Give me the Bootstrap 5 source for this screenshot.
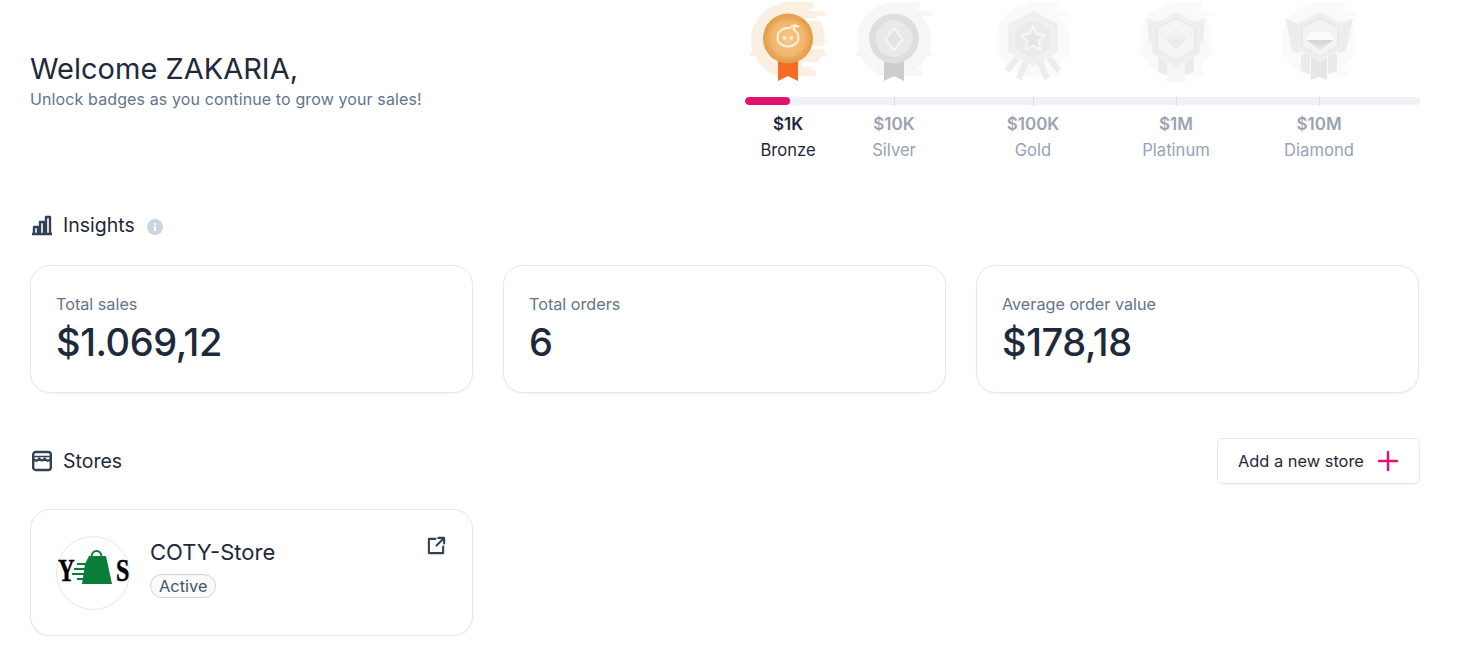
<!DOCTYPE html>
<html lang="en">
<head>
<meta charset="utf-8">
<title>Dashboard</title>
<link href="https://cdn.jsdelivr.net/npm/bootstrap@5.3.0/dist/css/bootstrap.min.css" rel="stylesheet">
<style>
body{font-family:Inter,"Liberation Sans",sans-serif;color:#1e293b;background:#fff;font-size:16px}
.page-wrap{padding:0 42px 0 30px}
.top-block{height:163px}
.hello{font-size:29px;line-height:34px;font-weight:400;margin:0;color:#1e293b}
.hello-sub{font-size:16px;line-height:24px;color:#64748b;margin:1px 0 0;letter-spacing:.12px}
.ladder{width:675px}
.ms-row{display:flex}
.ms-a{width:86px}.ms-b{width:126px}.ms-c{width:152px}.ms-d{width:134px}.ms-e{width:152px}
.medal-row{height:97px}
.medal-cell{display:flex;justify-content:center}
.medal-cell svg{width:76px;height:84px;display:block}
.bar-wrap{height:8px}
.bar-track{height:8px;background:#eef1f6;border-radius:4px;--bs-progress-bar-bg:#e3126f}
.bar-fill{border-radius:4px}
.ticks{position:absolute;inset:-1px 0 -1px 0;pointer-events:none}
.tick-cell{display:flex;justify-content:center}
.tick-cell i{display:block;width:1px;background:#dfe3ea}
.label-cell{text-align:center;color:#94a3b8;line-height:26px;padding-top:6px;white-space:nowrap;font-size:16.6px}
.label-cell b{display:block;font-weight:600;color:#9ca3af;font-size:17px}
.label-cell span{display:block;height:26px}
.label-cell.on{color:#1e293b}
.label-cell.on b{color:#1e293b}
.sect-head{font-size:19.500px;line-height:24px;color:#1e293b}
.sect-ins{height:24px;margin-top:50px;margin-bottom:28px}
.sect-sto{margin-top:45px;margin-bottom:25px;height:46px}
.sect-icon{width:22px;height:22px;margin-left:1px;margin-right:10px;color:#334155}
.tip-dot{width:16px;height:16px;margin-left:12px;margin-top:3px}
.cards-row{--bs-gutter-x:30px;margin-right:-14px}
.stat-box,.store-box{border:1px solid #e2e8f0;border-radius:20px;box-shadow:0 1px 2px rgba(15,23,42,.05);padding:26px 25px}
.stat-box{height:128px}
.stat-name{font-size:16.200px;line-height:24px;color:#64748b;margin:0}
.stat-val{font-size:38px;line-height:52px;font-weight:500;color:#1e293b;letter-spacing:-.4px}
.add-btn{--bs-btn-border-color:#e2e8f0;--bs-btn-hover-border-color:#e2e8f0;--bs-btn-color:#1e293b;--bs-btn-hover-color:#1e293b;--bs-btn-hover-bg:#f8fafc;--bs-btn-bg:#fff;--bs-btn-border-radius:6px;font-size:16.400px;height:46px;width:203px;padding:0 20px;box-shadow:0 1px 2px rgba(15,23,42,.05)}
.plus-ic{width:22px;height:22px;color:#e3126f;margin-left:11px}
.store-box{height:127px;display:flex;position:relative}
.store-logo{width:74px;height:74px;flex:none;margin-right:20px}
.store-name{font-size:22px;line-height:28px;color:#1e293b;margin:2px 0 8px}
.store-pill{display:inline-block;font-size:16.400px;line-height:22px;padding:0 8px;border:1px solid #cbd5e1;background:#f8fafc;border-radius:12px;color:#475569}
.ext-ic{position:absolute;top:26px;right:26px;width:19px;height:19px;color:#334155}
</style>
</head>
<body>
<svg width="0" height="0" class="position-absolute">
  <defs>
    <symbol id="cloud" viewBox="0 0 76 84">
      <circle cx="38" cy="40" r="37"/>
      <rect x="30" y="2" width="34" height="7" rx="3.500"/>
      <rect x="50" y="11" width="26" height="5" rx="2.500"/>
      <rect x="0" y="51" width="20" height="5" rx="2.500"/>
      <rect x="56" y="51" width="20" height="5" rx="2.500"/>
      <rect x="50" y="70" width="16" height="6" rx="3"/>
    </symbol>
    <filter id="soft" x="-10%" y="-10%" width="120%" height="120%"><feGaussianBlur stdDeviation=".45"/></filter>
    <radialGradient id="bronzeOuter"><stop offset="0.700" stop-color="#edb068"/><stop offset="1" stop-color="#e39a44"/></radialGradient>
    <radialGradient id="bronzeInner"><stop offset="0" stop-color="#f6c98b"/><stop offset="1" stop-color="#f0b468"/></radialGradient>
    <linearGradient id="gemGrey" x1="0" y1="0" x2="0" y2="1"><stop offset="0" stop-color="#d3d3d4"/><stop offset="1" stop-color="#eeeeef"/></linearGradient>
  </defs>
</svg>

<div class="page-wrap">
  <div class="top-block d-flex justify-content-between align-items-center">
    <div>
      <h1 class="hello">Welcome ZAKARIA,</h1>
      <p class="hello-sub">Unlock badges as you continue to grow your sales!</p>
    </div>
    <div class="ladder">
      <div class="ms-row medal-row">
        <div class="ms-a medal-cell">
          <svg viewBox="0 0 76 84">
            <use href="#cloud" width="76" height="84" fill="#fbefe2"/>
            <rect x="56" y="18" width="20" height="3" fill="#fff"/>
            <rect x="60" y="46" width="16" height="3" fill="#fff"/>
            <rect x="52" y="62" width="24" height="5" rx="2.500" fill="#fff"/>
            <path d="M28 58h20v23l-10-5-10 5z" fill="#f96a22"/>
            <circle cx="38" cy="38.500" r="25" fill="url(#bronzeOuter)"/>
            <circle cx="38" cy="38.500" r="18.500" fill="url(#bronzeInner)"/>
            <path d="M38 28c-6.500 0-10.500 4.500-10.500 9.500s4.500 9 10.500 9 10.500-4 10.500-9c0-4-2.500-6.500-5-8 .5-2 2-3.500 3.500-3.500-2.500-1.500-6 0-7 2z" fill="none" stroke="#fdf0dc" stroke-width="2"/>
            <circle cx="34.500" cy="38" r="1.800" fill="#fdf0dc"/><circle cx="41.500" cy="38" r="1.800" fill="#fdf0dc"/>
          </svg>
        </div>
        <div class="ms-b medal-cell">
          <svg viewBox="0 0 76 84">
            <g filter="url(#soft)">
            <use href="#cloud" width="76" height="84" fill="#f7f7f8"/>
            <path d="M28 58h20v23l-10-5-10 5z" fill="#cdcdcd"/>
            <circle cx="38" cy="38.500" r="25" fill="#dedede"/>
            <circle cx="38" cy="38.500" r="18.500" fill="#e9e9e9"/>
            <path d="M38 28l8.500 11.500L38 50l-8.500-10.500z" fill="#e3e3e3" stroke="#f5f5f5" stroke-width="2" stroke-linejoin="round"/>
            </g>
          </svg>
        </div>
        <div class="ms-c medal-cell">
          <svg viewBox="0 0 76 84">
            <g filter="url(#soft)">
            <use href="#cloud" width="76" height="84" fill="#fafafa"/>
            <path d="M22 58l-10 13M31 62l-7 17M45 62l7 17M54 58l10 13" stroke="#ececed" stroke-width="6"/>
            <path d="M38 11l25 13v28L38 66 13 52V24z" fill="#efeff0"/>
            <path d="M38 18l19 10v21L38 60 19 49V28z" fill="#ebebec" stroke="#f2f2f3" stroke-width="2"/>
            <path d="M38 26l3.500 8 8.500 1-6.500 6 2 9L38 45.500 30.500 50l2-9-6.500-6 8.500-1z" fill="#e6e6e7" stroke="#f7f7f8" stroke-width="2" stroke-linejoin="round"/>
            </g>
          </svg>
        </div>
        <div class="ms-d medal-cell">
          <svg viewBox="0 0 76 84">
            <g filter="url(#soft)">
            <use href="#cloud" width="76" height="84" fill="#fafafa"/>
            <path d="M9 18l12 5v20H11zM67 18l-12 5v20h10z" fill="#eeeeef"/>
            <path d="M20 55h9v20l-9-3zM47 55h9v17l-9 3z" fill="#ebebec"/>
            <path d="M29 58h18v24H29z" fill="#f7f7f8"/>
            <path d="M38 12l24 13v29L38 67 14 54V25z" fill="#efeff0"/>
            <path d="M38 18l19 10v22L38 61 19 50V28z" fill="#f4f4f5" stroke="#ebebec" stroke-width="2"/>
            <path d="M38 26l13 13-13 13-13-13z" fill="#ececed" stroke="#f8f8f9" stroke-width="2"/>
            <path d="M38 26l13 13H25z" fill="#f1f1f2"/>
            </g>
          </svg>
        </div>
        <div class="ms-e medal-cell">
          <svg viewBox="0 0 76 84">
            <g filter="url(#soft)">
            <use href="#cloud" width="76" height="84" fill="#fafafa"/>
            <path d="M4 18l14 6v30l-7-3zM72 18l-14 6v30l7-3z" fill="#ededee"/>
            <path d="M20 54h9v20l-9-3zM47 54h9v17l-9 3z" fill="#ebebec"/>
            <path d="M30 56h16v24l-8-3-8 3z" fill="#e6e6e7"/>
            <path d="M39 12l23 12v25L39 62 16 49V24z" fill="#efeff0"/>
            <path d="M39 18l18 9v19L39 57 21 46V27z" fill="#f3f3f4" stroke="#e9e9ea" stroke-width="2"/>
            <path d="M31 32h16l6 7-14 12-14-12z" fill="#fbfbfb"/>
            <path d="M26 40h26L39 51z" fill="url(#gemGrey)"/>
            </g>
          </svg>
        </div>
      </div>
      <div class="bar-wrap position-relative">
        <div class="progress bar-track" role="progressbar" aria-valuenow="7" aria-valuemin="0" aria-valuemax="100">
          <div class="progress-bar bar-fill" style="width:6.7%"></div>
        </div>
        <div class="ticks ms-row">
          <div class="ms-a"></div>
          <div class="ms-b tick-cell"><i></i></div>
          <div class="ms-c tick-cell"><i></i></div>
          <div class="ms-d tick-cell"><i></i></div>
          <div class="ms-e tick-cell"><i></i></div>
        </div>
      </div>
      <div class="ms-row">
        <div class="ms-a label-cell on"><b>$1K</b><span>Bronze</span></div>
        <div class="ms-b label-cell"><b>$10K</b><span>Silver</span></div>
        <div class="ms-c label-cell"><b>$100K</b><span>Gold</span></div>
        <div class="ms-d label-cell"><b>$1M</b><span>Platinum</span></div>
        <div class="ms-e label-cell"><b>$10M</b><span>Diamond</span></div>
      </div>
    </div>
  </div>

  <div class="sect-head sect-ins d-flex align-items-center">
    <svg class="sect-icon" viewBox="0 0 22 22" fill="none" stroke="currentColor" stroke-width="2.400" stroke-linejoin="round"><path d="M1 20h20M3 20v-7h4v7M9 20V8h4v12M15 20V3h4v17"/></svg>
    <span>Insights</span>
    <svg class="tip-dot" viewBox="0 0 16 16"><circle cx="8" cy="8" r="8" fill="#cbd5e1"/><rect x="7" y="7" width="2" height="5" fill="#fff"/><rect x="7" y="4" width="2" height="2" fill="#fff"/></svg>
  </div>

  <div class="row cards-row">
    <div class="col-4">
      <div class="stat-box bg-white">
        <p class="stat-name">Total sales</p>
        <div class="stat-val">$1.069,12</div>
      </div>
    </div>
    <div class="col-4">
      <div class="stat-box bg-white">
        <p class="stat-name">Total orders</p>
        <div class="stat-val">6</div>
      </div>
    </div>
    <div class="col-4">
      <div class="stat-box bg-white">
        <p class="stat-name">Average order value</p>
        <div class="stat-val">$178,18</div>
      </div>
    </div>
  </div>

  <div class="sect-head sect-sto d-flex align-items-center justify-content-between">
    <div class="d-flex align-items-center">
      <svg class="sect-icon" viewBox="0 0 22 22" fill="none" stroke="currentColor" stroke-width="2.400" stroke-linejoin="round" stroke-linecap="round"><rect x="2.200" y="2" width="17.600" height="18" rx="2.500"/><path d="M2.200 8.500c1.500 3 4.500 3 6 0 1 2.500 4.600 2.500 5.600 0 1.500 3 4.500 3 6 0"/><path d="M3 6.500h16" stroke-width="1.600"/></svg>
      <span>Stores</span>
    </div>
    <button type="button" class="btn add-btn d-flex align-items-center justify-content-between">
      <span>Add a new store</span>
      <svg class="plus-ic" viewBox="0 0 22 22" fill="none" stroke="currentColor" stroke-width="2.400" stroke-linecap="round"><path d="M11 2v18M2 11h18"/></svg>
    </button>
  </div>

  <div class="row cards-row">
    <div class="col-4">
      <div class="store-box bg-white">
        <svg class="store-logo" viewBox="0 0 74 74">
          <circle cx="37" cy="37" r="36.500" fill="#fff" stroke="#e2e8f0"/>
          <text transform="translate(2 45) scale(.72 1)" font-family="Liberation Serif" font-weight="700" font-size="32" stroke="#000" stroke-width=".5">Y</text>
          <text transform="translate(60 45) scale(.75 1)" font-family="Liberation Serif" font-weight="700" font-size="32" stroke="#000" stroke-width=".5">S</text>
          <path d="M35.500 21c0-8 10-8 10 0" fill="none" stroke="#0a7d38" stroke-width="2"/>
          <path d="M33 20h17l6 28H26l3-20z" fill="#0a7d38"/>
          <path d="M21 27h12v2H21zM18 32h12v2H18zM16 37h12v2H16zM21 42h8v2h-8z" fill="#0a7d38"/>
        </svg>
        <div>
          <div class="store-name">COTY-Store</div>
          <span class="store-pill">Active</span>
        </div>
        <svg class="ext-ic" viewBox="0 0 20 20" fill="none" stroke="currentColor" stroke-width="2.200" stroke-linecap="round" stroke-linejoin="round"><path d="M9 3H2v15h15v-7M10 10l8-8M12 2h6v6"/></svg>
      </div>
    </div>
  </div>
</div>
<script src="https://cdn.jsdelivr.net/npm/bootstrap@5.3.0/dist/js/bootstrap.bundle.min.js"></script>
</body>
</html>
